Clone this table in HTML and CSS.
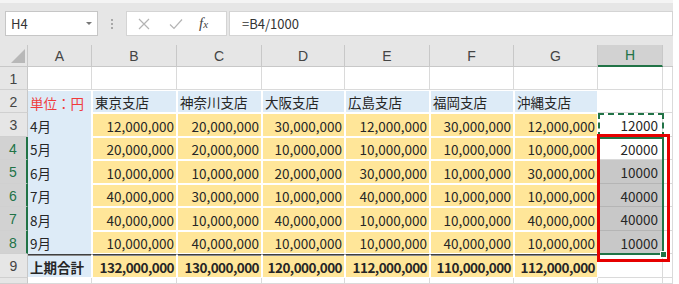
FILE: index.html
```html
<!DOCTYPE html>
<html lang="ja">
<head>
<meta charset="utf-8">
<link rel="stylesheet" href="styles.css">
</head>
<body>
<div class="app">
  <div class="toolbar">
    <div class="namebox"><span class="ref">H4</span><span class="caret"></span></div>
    <div class="grip"><span></span><span></span><span></span></div>
    <div class="fxbox">
      <svg class="ico" width="12" height="12" viewBox="0 0 12 12"><path d="M1 1 L11 11 M11 1 L1 11" stroke="#b4b4b4" stroke-width="1.2" fill="none"/></svg>
      <svg class="ico" width="14" height="12" viewBox="0 0 14 12"><path d="M1 6.5 L5 10.5 L13 1.5" stroke="#b4b4b4" stroke-width="1.2" fill="none"/></svg>
      <span class="fx">f<span class="fxx">x</span></span>
    </div>
    <div class="formula">=B4/1000</div>
  </div>
  <div class="sheet">
    <div class="grid">
      <!-- header row -->
      <div class="corner"><span class="tri"></span></div>
      <div class="ch">A</div><div class="ch">B</div><div class="ch">C</div><div class="ch">D</div>
      <div class="ch">E</div><div class="ch">F</div><div class="ch">G</div><div class="ch sel">H</div><div class="ch end"></div>
      <!-- row 1 -->
      <div class="rh">1</div>
      <div class="c"></div><div class="c"></div><div class="c"></div><div class="c"></div><div class="c"></div><div class="c"></div><div class="c"></div><div class="c"></div><div class="c"></div>
      <!-- row 2 -->
      <div class="rh">2</div>
      <div class="c a red">単位：円</div>
      <div class="c hd">東京支店</div><div class="c hd">神奈川支店</div><div class="c hd">大阪支店</div><div class="c hd">広島支店</div><div class="c hd">福岡支店</div><div class="c hd">沖縄支店</div>
      <div class="c"></div><div class="c"></div>
      <!-- row 3 -->
      <div class="rh">3</div>
      <div class="c a">4月</div>
      <div class="c y">12,000,000</div><div class="c y">20,000,000</div><div class="c y">30,000,000</div><div class="c y">12,000,000</div><div class="c y">30,000,000</div><div class="c y">12,000,000</div>
      <div class="c n">12000</div><div class="c"></div>
      <!-- row 4 -->
      <div class="rh on">4</div>
      <div class="c a">5月</div>
      <div class="c y">20,000,000</div><div class="c y">20,000,000</div><div class="c y">10,000,000</div><div class="c y">10,000,000</div><div class="c y">10,000,000</div><div class="c y">10,000,000</div>
      <div class="c n">20000</div><div class="c"></div>
      <!-- row 5 -->
      <div class="rh on">5</div>
      <div class="c a">6月</div>
      <div class="c y">10,000,000</div><div class="c y">10,000,000</div><div class="c y">20,000,000</div><div class="c y">30,000,000</div><div class="c y">10,000,000</div><div class="c y">30,000,000</div>
      <div class="c n g">10000</div><div class="c"></div>
      <!-- row 6 -->
      <div class="rh on">6</div>
      <div class="c a">7月</div>
      <div class="c y">40,000,000</div><div class="c y">30,000,000</div><div class="c y">10,000,000</div><div class="c y">40,000,000</div><div class="c y">10,000,000</div><div class="c y">10,000,000</div>
      <div class="c n g">40000</div><div class="c"></div>
      <!-- row 7 -->
      <div class="rh on">7</div>
      <div class="c a">8月</div>
      <div class="c y">40,000,000</div><div class="c y">10,000,000</div><div class="c y">40,000,000</div><div class="c y">10,000,000</div><div class="c y">10,000,000</div><div class="c y">40,000,000</div>
      <div class="c n g">40000</div><div class="c"></div>
      <!-- row 8 -->
      <div class="rh on">8</div>
      <div class="c a">9月</div>
      <div class="c y">10,000,000</div><div class="c y">40,000,000</div><div class="c y">10,000,000</div><div class="c y">10,000,000</div><div class="c y">40,000,000</div><div class="c y">10,000,000</div>
      <div class="c n g">10000</div><div class="c"></div>
      <!-- row 9 -->
      <div class="rh">9</div>
      <div class="c a tot">上期合計</div>
      <div class="c y tot num">132,000,000</div><div class="c y tot num">130,000,000</div><div class="c y tot num">120,000,000</div><div class="c y tot num">112,000,000</div><div class="c y tot num">110,000,000</div><div class="c y tot num">112,000,000</div>
      <div class="c"></div><div class="c"></div>
      <!-- row 10 partial -->
      <div class="rh"></div>
      <div class="c"></div><div class="c"></div><div class="c"></div><div class="c"></div><div class="c"></div><div class="c"></div><div class="c"></div><div class="c"></div><div class="c"></div>
    </div>
    <div class="marquee"></div>
    <div class="selection"><span class="handle"></span></div>
    <div class="redbox"></div>
  </div>
</div>
</body>
</html>
```

FILE: styles.css
```css
* { box-sizing: border-box; }
html, body { margin: 0; padding: 0; background: #ffffff; }
body {
  font-family: "Noto Sans CJK JP", "Noto Sans", sans-serif;
  color: #262626;
}
.app { width: 673px; overflow: hidden; }

/* toolbar */
.toolbar {
  height: 45px;
  background: #e6e6e6;
  border-top: 3px solid #f4f4f4;
  display: flex;
  align-items: flex-start;
  padding-top: 8px;
  padding-left: 5px;
}
.namebox {
  width: 93px;
  height: 25px;
  background: #fff;
  border: 1px solid #c6c6c6;
  display: flex;
  align-items: center;
  justify-content: space-between;
  padding: 0 5px 0 5px;
  font-size: 13px;
  color: #333;
}
.caret {
  width: 0; height: 0;
  border-left: 3px solid transparent;
  border-right: 3px solid transparent;
  border-top: 3px solid #777;
}
.grip {
  width: 28px;
  height: 25px;
  display: flex;
  flex-direction: column;
  align-items: center;
  justify-content: center;
  gap: 2px;
}
.grip span { width: 2px; height: 2px; background: #a8a8a8; display: block; }
.fxbox {
  width: 101px;
  height: 25px;
  background: #fff;
  border: 1px solid #d4d4d4;
  display: flex;
  align-items: center;
  padding-left: 11px;
  gap: 19px;
}
.fxbox .ico { display: block; }
.fx {
  font-family: "Liberation Serif", serif;
  font-style: italic;
  font-size: 15px;
  color: #444;
  margin-left: -3px;
}
.fxx { font-size: 11px; }
.formula {
  flex: 1;
  height: 25px;
  margin-left: 2px;
  background: #fff;
  border: 1px solid #d4d4d4;
  font-size: 13px;
  color: #333;
  display: flex;
  align-items: center;
  padding-left: 12px;
}

/* sheet */
.sheet { position: relative; }
.grid {
  display: grid;
  grid-template-columns: 28px 64px 85px 85px 83px 85px 84px 84px 65px 10px;
  grid-template-rows: 22px 23px 23px 24px 23px 24px 23px 24px 23px 24px 6px;
  font-size: 13.5px;
}
.corner {
  background: #e6e6e6;
  border-right: 1px solid #c8c8c8;
  border-bottom: 1px solid #c8c8c8;
  position: relative;
}
.tri {
  position: absolute;
  right: 2px; bottom: 3px;
  width: 0; height: 0;
  border-left: 14px solid transparent;
  border-bottom: 14px solid #b8b8b8;
}
.ch {
  background: #e6e6e6;
  border-right: 1px solid #c8c8c8;
  border-bottom: 1px solid #c8c8c8;
  display: flex;
  align-items: center;
  justify-content: center;
  font-family: "Liberation Sans", sans-serif;
  font-size: 14px;
  color: #444;
}
.ch.sel {
  background: #d2d2d2;
  color: #217346;
  border-bottom: 2px solid #217346;
}
.ch.end { border-right: none; }
.rh {
  background: #e6e6e6;
  border-right: 1px solid #c8c8c8;
  border-bottom: 1px solid #d0d0d0;
  display: flex;
  align-items: center;
  justify-content: center;
  font-family: "Liberation Sans", sans-serif;
  font-size: 14px;
  color: #444;
  padding-top: 1px;
}
.rh.on {
  background: #d2d2d2;
  color: #217346;
  border-right: 2px solid #217346;
}
.c {
  background: #fff;
  border-right: 1px solid #dadada;
  border-bottom: 1px solid #dadada;
  display: flex;
  align-items: center;
  white-space: nowrap;
  overflow: hidden;
  padding-top: 1px;
}
.c.a {
  background: #ddebf7;
  border-right: 1px solid #fff;
  border-bottom: none;
  padding-left: 2px;
}
.c.red { color: #ef3b3b; border-top: 1px solid #fff; }
.c.hd {
  background: #ddebf7;
  border: 1px solid #fff;
  padding-left: 2px;
}
.c.y {
  background: #ffe699;
  border: 1px solid #fff;
  justify-content: flex-end;
  padding-right: 2px;
}
.c.n {
  justify-content: flex-end;
  padding-right: 4px;
}
.c.g {
  background: #c8c8c8;
  border-right-color: #b5b5b5;
  border-bottom-color: #b5b5b5;
}
.c.tot {
  font-weight: bold;
  border-top: 1px solid #3f3f3f;
  box-shadow: inset 0 1px 0 #8c8c8c;
}
.c.tot.num { letter-spacing: -0.55px; }
.c.a.tot { border-bottom: 1px solid #fff; }

/* overlays */
.marquee {
  position: absolute;
  left: 598px; top: 68px;
  width: 66px; height: 25px;
  border: 2px dashed #217346;
}
.selection {
  position: absolute;
  left: 598px; top: 92px;
  width: 66px; height: 118px;
  border: 2px solid #217346;
}
.handle {
  position: absolute;
  right: -5px; bottom: -5px;
  width: 7px; height: 7px;
  background: #217346;
  border: 1px solid #fff;
}
.redbox {
  position: absolute;
  left: 597px; top: 89px;
  width: 73px; height: 128px;
  border: 3px solid #e60000;
}
```
